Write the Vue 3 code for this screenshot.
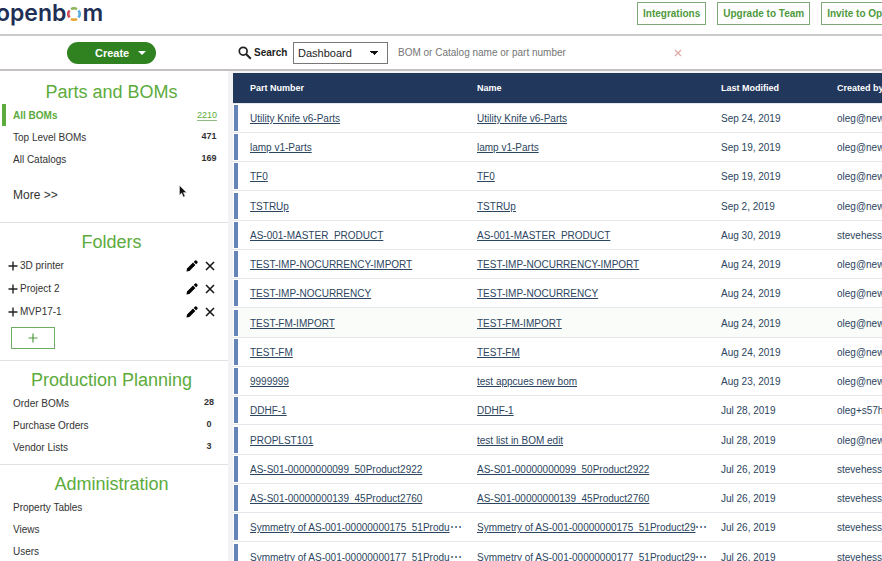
<script setup>
import { ref } from 'vue';

const searchScope = ref('Dashboard');
const searchText = ref('');

const partLinks = [
  { name: 'All BOMs', count: 2210, active: true },
  { name: 'Top Level BOMs', count: 471 },
  { name: 'All Catalogs', count: 169 }
];

const folders = ref(['3D printer', 'Project 2', 'MVP17-1']);

const planningLinks = [
  { name: 'Order BOMs', count: 28 },
  { name: 'Purchase Orders', count: 0 },
  { name: 'Vendor Lists', count: 3 }
];

const adminLinks = ['Property Tables', 'Views', 'Users'];

const boms = ref([
  { part: 'Utility Knife v6-Parts', name: 'Utility Knife v6-Parts', modified: 'Sep 24, 2019', by: 'oleg@new' },
  { part: 'lamp v1-Parts', name: 'lamp v1-Parts', modified: 'Sep 19, 2019', by: 'oleg@new' },
  { part: 'TF0', name: 'TF0', modified: 'Sep 19, 2019', by: 'oleg@new' },
  { part: 'TSTRUp', name: 'TSTRUp', modified: 'Sep 2, 2019', by: 'oleg@new' },
  { part: 'AS-001-MASTER_PRODUCT', name: 'AS-001-MASTER_PRODUCT', modified: 'Aug 30, 2019', by: 'stevehess' },
  { part: 'TEST-IMP-NOCURRENCY-IMPORT', name: 'TEST-IMP-NOCURRENCY-IMPORT', modified: 'Aug 24, 2019', by: 'oleg@new' },
  { part: 'TEST-IMP-NOCURRENCY', name: 'TEST-IMP-NOCURRENCY', modified: 'Aug 24, 2019', by: 'oleg@new' },
  { part: 'TEST-FM-IMPORT', name: 'TEST-FM-IMPORT', modified: 'Aug 24, 2019', by: 'oleg@new', hovered: true },
  { part: 'TEST-FM', name: 'TEST-FM', modified: 'Aug 24, 2019', by: 'oleg@new' },
  { part: '9999999', name: 'test appcues new bom', modified: 'Aug 23, 2019', by: 'oleg@new' },
  { part: 'DDHF-1', name: 'DDHF-1', modified: 'Jul 28, 2019', by: 'oleg+s57h' },
  { part: 'PROPLST101', name: 'test list in BOM edit', modified: 'Jul 28, 2019', by: 'oleg@new' },
  { part: 'AS-S01-00000000099_50Product2922', name: 'AS-S01-00000000099_50Product2922', modified: 'Jul 26, 2019', by: 'stevehess' },
  { part: 'AS-S01-00000000139_45Product2760', name: 'AS-S01-00000000139_45Product2760', modified: 'Jul 26, 2019', by: 'stevehess' },
  { part: 'Symmetry of AS-001-00000000175_51Produ', name: 'Symmetry of AS-001-00000000175_51Product29', modified: 'Jul 26, 2019', by: 'stevehess', cut: true },
  { part: 'Symmetry of AS-001-00000000177_51Produ', name: 'Symmetry of AS-001-00000000177_51Product29', modified: 'Jul 26, 2019', by: 'stevehess', cut: true }
]);
</script>

<template>
  <div class="page">
    <header class="topbar">
      <a class="logo" href="#" aria-label="openbom">
        <span>openb</span>
        <svg class="ring" viewBox="0 0 14 14">
          <g fill="none" stroke-width="2.6">
            <path d="M4 2.2A5.6 5.6 0 0 1 10 2.2" stroke="#8fb65a" />
            <path d="M11.4 3.5A5.6 5.6 0 0 1 11.4 10.5" stroke="#5aaede" />
            <path d="M10 11.8A5.6 5.6 0 0 1 4 11.8" stroke="#eba63c" />
            <path d="M2.6 10.5A5.6 5.6 0 0 1 2.6 3.5" stroke="#d4505c" />
          </g>
        </svg>
        <span>m</span>
      </a>
      <nav class="top-actions">
        <button>Integrations</button>
        <button>Upgrade to Team</button>
        <button>Invite to OpenBOM</button>
      </nav>
    </header>

    <div class="toolbar">
      <div class="create-area">
        <button class="create">Create <span class="caret"></span></button>
      </div>
      <form class="search" @submit.prevent>
        <svg class="search-icon" viewBox="0 0 14 14">
          <circle cx="5.2" cy="5.2" r="3.9" fill="none" stroke="#222" stroke-width="1.7" />
          <path d="M8 8L12.8 12.8" stroke="#222" stroke-width="2" />
        </svg>
        <label for="scope">Search</label>
        <select id="scope" v-model="searchScope">
          <option>Dashboard</option>
        </select>
        <input v-model="searchText" aria-label="Search text" placeholder="BOM or Catalog name or part number" />
        <button class="clear" type="button" aria-label="Clear" @click="searchText = ''">
          <svg viewBox="0 0 8 8"><path d="M1 1L7 7M7 1L1 7" stroke="#dfa9a9" stroke-width="1.3" /></svg>
        </button>
      </form>
    </div>

    <div class="content">
      <aside class="sidebar">
        <section class="parts">
          <h2>Parts and BOMs</h2>
          <a v-for="link in partLinks" :key="link.name" href="#" class="side-link" :class="{ active: link.active }">
            <span>{{ link.name }}</span>
            <span class="count">{{ link.count }}</span>
          </a>
          <a href="#" class="more">More &gt;&gt;</a>
        </section>

        <section class="folders">
          <h2>Folders</h2>
          <div v-for="folder in folders" :key="folder" class="folder">
            <button aria-label="Expand">
              <svg viewBox="0 0 12 12"><path d="M6 1.5V10.5M1.5 6H10.5" stroke="#222" stroke-width="1.4" /></svg>
            </button>
            <span class="folder-name">{{ folder }}</span>
            <button aria-label="Rename">
              <svg viewBox="0 0 12 12"><path d="M0.5 11.5L1 8.6L7 2.6L9.4 5L3.4 11ZM7.7 1.9L9.1 0.6Q9.8 0 10.4 0.6L11.4 1.6Q12 2.2 11.4 2.9L10.1 4.3Z" fill="#000" /></svg>
            </button>
            <button aria-label="Delete">
              <svg viewBox="0 0 12 12"><path d="M2 2L10 10M10 2L2 10" stroke="#111" stroke-width="1.5" /></svg>
            </button>
          </div>
          <button class="add-folder" aria-label="Add folder">
            <svg viewBox="0 0 12 12"><path d="M6 1.5V10.5M1.5 6H10.5" stroke="#4f9a3c" stroke-width="1.2" /></svg>
          </button>
        </section>

        <section class="planning">
          <h2>Production Planning</h2>
          <a v-for="link in planningLinks" :key="link.name" href="#" class="side-link">
            <span>{{ link.name }}</span>
            <span class="count">{{ link.count }}</span>
          </a>
        </section>

        <section>
          <h2>Administration</h2>
          <a v-for="link in adminLinks" :key="link" href="#" class="side-link">{{ link }}</a>
        </section>

        <svg class="pointer" viewBox="0 0 8 13">
          <path d="M0.5 0.5V10L2.7 8L4.3 12L6 11.3L4.4 7.5H7.5Z" fill="#111" stroke="#ddd" stroke-width="0.5" />
        </svg>
      </aside>

      <main class="list">
        <table>
          <colgroup>
            <col class="col-part" />
            <col class="col-name" />
            <col class="col-modified" />
            <col />
          </colgroup>
          <thead>
            <tr>
              <th>Part Number</th>
              <th>Name</th>
              <th>Last Modified</th>
              <th>Created by</th>
            </tr>
          </thead>
          <tbody>
            <tr v-for="bom in boms" :key="bom.part" :class="{ hovered: bom.hovered }">
              <td><a href="#">{{ bom.part }}</a><span v-if="bom.cut" class="dots">⋯</span></td>
              <td><a href="#">{{ bom.name }}</a><span v-if="bom.cut" class="dots">⋯</span></td>
              <td>{{ bom.modified }}</td>
              <td>{{ bom.by }}</td>
            </tr>
          </tbody>
        </table>
      </main>
    </div>
  </div>
</template>

<style>
body {
  overflow: hidden;
}
</style>

<style scoped>
.page {
  display: flex;
  flex-direction: column;
  height: 100vh;
  overflow: hidden;
  background: #f3f3f5;
  font-family: "Liberation Sans", Arial, sans-serif;
  font-size: 10px;
  color: #333;
}
button {
  padding: 0;
  border: none;
  background: none;
  font-family: inherit;
  cursor: pointer;
}
a {
  color: inherit;
  text-decoration: none;
}
svg {
  display: block;
}

/* Top bar */
.topbar {
  display: flex;
  flex: none;
  justify-content: space-between;
  height: 34px;
  background: #fff;
  overflow: hidden;
}
.logo {
  display: flex;
  align-items: center;
  height: 26px;
  margin-left: -4px;
  font-family: Inter, sans-serif;
  font-size: 23px;
  font-weight: 600;
  line-height: 26px;
  color: #1f2f55;
}
.ring {
  width: 14px;
  height: 14px;
  margin: 2px 1px 0;
}
.top-actions {
  display: flex;
  flex: 0 0 245px;
  gap: 11px;
  padding-top: 2px;
  overflow: hidden;
}
.top-actions button {
  flex: none;
  height: 23px;
  padding: 0 5px;
  border: 1px solid #7fa878;
  font-size: 10px;
  font-weight: bold;
  color: #4f9a3c;
}

/* Toolbar */
.toolbar {
  display: flex;
  flex: none;
  height: 33px;
  border-top: 2px solid #cbcaca;
  border-bottom: 2px solid #c5c1c0;
  background: #fff;
}
.create-area {
  display: flex;
  flex: 0 0 238px;
  align-items: center;
}
.create {
  display: flex;
  align-items: center;
  gap: 9px;
  height: 22px;
  margin-left: 67px;
  padding: 0 10px 0 28px;
  border-radius: 11px;
  background: #2f821f;
  font-size: 11px;
  font-weight: bold;
  color: #fff;
}
.caret {
  border: 4px solid transparent;
  border-top-color: #fff;
  border-bottom: none;
}
.search {
  display: flex;
  flex: 1;
  align-items: center;
}
.search-icon {
  width: 14px;
  height: 14px;
  margin-right: 2px;
}
.search label {
  width: 39px;
  font-size: 10px;
  font-weight: bold;
  color: #222;
}
.search select {
  width: 95px;
  height: 22px;
  padding: 0 4px;
  border: 1px solid #777;
  border-radius: 0;
  appearance: none;
  background: #fff conic-gradient(from -45deg at 50% 100%, #111 90deg, transparent 0) right 9px center / 8px 4px no-repeat;
  font-family: inherit;
  font-size: 11px;
  color: #222;
}
.search input {
  width: 276px;
  padding: 0 0 0 10px;
  border: none;
  outline: none;
  font-family: inherit;
  font-size: 10px;
}
.search input::placeholder {
  color: #757575;
}
.clear svg {
  width: 8px;
  height: 8px;
}

/* Sidebar */
.content {
  display: flex;
  flex: 1;
  min-height: 0;
}
.sidebar {
  position: relative;
  flex: 0 0 228px;
  background: #fff;
}
section {
  border-bottom: 1px solid #e0e2e1;
}
h2 {
  margin: 0;
  padding: 7px 5px 0 0;
  font-size: 18px;
  font-weight: normal;
  line-height: 24px;
  text-align: center;
  color: #5cab3c;
}
.side-link {
  display: flex;
  align-items: center;
  justify-content: space-between;
  height: 22px;
  padding: 0 11px 0 13px;
}
.active {
  padding-left: 7px;
  margin-left: 2px;
  border-left: 4px solid #5cab3c;
  font-weight: bold;
  color: #5cab3c;
}
.count {
  min-width: 16px;
  padding-bottom: 2px;
  font-size: 9px;
  font-weight: bold;
  text-align: center;
}
.active .count {
  padding-bottom: 0;
  border-bottom: 1px solid #8fbf85;
  font-weight: normal;
}
.parts {
  padding-top: 2px;
}
.more {
  display: block;
  padding: 14px 13px 16px;
  font-size: 12px;
  line-height: 22px;
}
.folders {
  padding-bottom: 11px;
}
.folder {
  display: flex;
  align-items: center;
  height: 23px;
  padding: 0 12px 0 7px;
}
.folder svg {
  width: 12px;
  height: 12px;
}
.folder button + button {
  margin-left: 6px;
}
.folder-name {
  flex: 1;
  padding-left: 1px;
}
.add-folder {
  display: flex;
  align-items: center;
  justify-content: center;
  width: 44px;
  height: 22px;
  margin: 4px 0 0 11px;
  border: 1px solid #6fae62;
}
.add-folder svg {
  width: 12px;
  height: 12px;
}
.planning {
  padding-bottom: 6px;
}
.pointer {
  position: absolute;
  top: 114px;
  left: 179px;
  width: 8px;
  height: 13px;
}

/* BOM list */
.list {
  flex: 1;
  min-width: 0;
  margin: 2px 0 0 5px;
  overflow: hidden;
  background: #fff;
}
table {
  width: 100%;
  table-layout: fixed;
  border-spacing: 0;
}
.col-part {
  width: 236px;
}
.col-name {
  width: 244px;
}
.col-modified {
  width: 116px;
}
th,
td {
  box-sizing: border-box;
  padding: 0 0 0 8px;
  border-bottom: 1px solid #e3e6ea;
  text-align: left;
  white-space: nowrap;
}
th {
  height: 31px;
  background: #22375c;
  background-clip: padding-box;
  font-size: 9px;
  color: #fff;
}
td {
  height: 29px;
  padding-top: 1px;
  color: #2c4560;
}
/* keeps the list on its 117px rhythm per four rows */
tr:nth-child(4n) td {
  height: 30px;
}
th:first-child,
td:first-child {
  padding-left: 17px;
}
td:first-child {
  background: linear-gradient(#6584b8, #6584b8) 1px 50% / 4px 26px no-repeat;
}
td a {
  text-decoration: underline;
}
.dots {
  font-size: 12px;
  line-height: 10px;
}
.hovered {
  background: #f9fcf9;
}
</style>
